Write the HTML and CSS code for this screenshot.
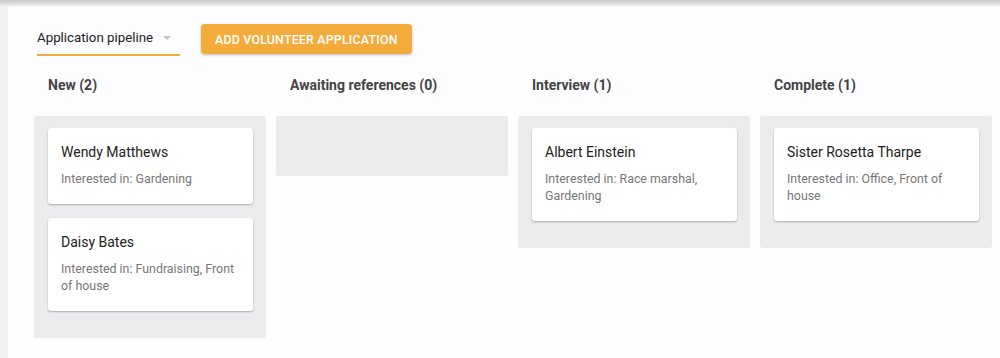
FILE: index.html
```html
<!DOCTYPE html>
<html>
<head>
    <title>Application pipeline</title>
    <link rel="stylesheet" href="styles.css">
</head>
<body>
    <div class="appbar-shadow"></div>
    <div class="paper">
        <div class="toolbar">
            <div class="select">
                <span>Application pipeline</span>
                <span class="caret"></span>
            </div>
            <button class="add-btn">Add volunteer application</button>
        </div>

        <div class="board">
            <div class="column">
                <div class="column-title">New (2)</div>
                <div class="lane">
                    <div class="card">
                        <div class="card-name">Wendy Matthews</div>
                        <div class="card-sub">Interested in: Gardening</div>
                    </div>
                    <div class="card">
                        <div class="card-name">Daisy Bates</div>
                        <div class="card-sub">Interested in: Fundraising, Front of house</div>
                    </div>
                </div>
            </div>
            <div class="column">
                <div class="column-title">Awaiting references (0)</div>
                <div class="lane"></div>
            </div>
            <div class="column">
                <div class="column-title">Interview (1)</div>
                <div class="lane">
                    <div class="card">
                        <div class="card-name">Albert Einstein</div>
                        <div class="card-sub">Interested in: Race marshal, Gardening</div>
                    </div>
                </div>
            </div>
            <div class="column">
                <div class="column-title">Complete (1)</div>
                <div class="lane">
                    <div class="card">
                        <div class="card-name">Sister Rosetta Tharpe</div>
                        <div class="card-sub">Interested in: Office, Front of house</div>
                    </div>
                </div>
            </div>
        </div>
    </div>
</body>
</html>
```

FILE: styles.css
```css
body {
    margin: 0;
    background-color: #f1f1f3;
    font-family: Roboto, "Liberation Sans", Arial, sans-serif;
    color: #222;
    height: 100vh;
    overflow: hidden;
}
.appbar-shadow {
    height: 6px;
    background: linear-gradient(#c9c9cc, #ececee);
}
.paper {
    margin-left: 8px;
    background-color: #fdfcfe;
    border-top-left-radius: 4px;
    padding: 18px 8px 0 26px;
    height: calc(100vh - 6px);
    box-sizing: border-box;
}
.toolbar {
    display: flex;
    align-items: flex-start;
    margin-left: 3px;
}
.select {
    width: 143px;
    height: 32px;
    box-sizing: border-box;
    padding-top: 6px;
    display: flex;
    justify-content: space-between;
    font-size: 13.3px;
    line-height: 16px;
    color: #222;
    border-bottom: 2px solid #f2ab3a;
}
.caret {
    width: 0;
    height: 0;
    margin: 6px 9px 0 0;
    border-left: 4.5px solid transparent;
    border-right: 4.5px solid transparent;
    border-top: 4.5px solid #c4c4c4;
}
.add-btn {
    margin-left: 21px;
    height: 30px;
    padding: 0 14px;
    border: none;
    border-radius: 4px;
    background-color: #f3ab3b;
    color: #fff;
    font-family: inherit;
    font-size: 12.4px;
    font-weight: 500;
    letter-spacing: 0.2px;
    text-transform: uppercase;
    box-shadow: 0 1px 3px rgba(0, 0, 0, 0.25);
}
.board {
    display: flex;
    gap: 10px;
    align-items: flex-start;
}
.column {
    width: 232px;
}
.column-title {
    padding: 21px 14px 23px;
    font-size: 14px;
    line-height: 16px;
    font-weight: 700;
    color: #444;
}
.lane {
    background-color: #ebeaec;
    border-radius: 3px;
    padding: 12px 13px 13px 14px;
    min-height: 35px;
}
.card {
    background-color: #fff;
    border-radius: 3px;
    padding: 14px 13px 17px;
    margin-bottom: 14px;
    box-shadow: 0 1px 2px rgba(0, 0, 0, 0.28);
}
.card-name {
    font-size: 14px;
    line-height: 20px;
    margin-bottom: 8px;
    color: #222;
}
.card-sub {
    font-size: 12.4px;
    line-height: 17px;
    color: #777;
}
```
